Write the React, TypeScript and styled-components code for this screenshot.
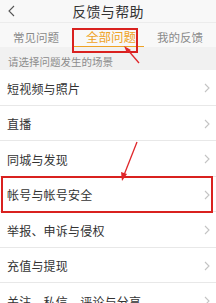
import React from "react";
import styled, { createGlobalStyle } from "styled-components";

const Global = createGlobalStyle`
  html, body { margin: 0; padding: 0; background: #ffffff; }
  body {
    font-family: "Noto Sans CJK SC", "Noto Sans", sans-serif;
    width: 216px;
    height: 303px;
    overflow: hidden;
  }
`;

const Page = styled.div`
  position: relative;
  width: 216px;
  height: 303px;
  overflow: hidden;
  background: #ffffff;
`;

const Header = styled.div`
  display: grid;
  grid-template-columns: 30px 1fr 30px;
  align-items: center;
  height: 22px;
  background: #f8f8f8;
`;

const Back = styled.div`
  display: flex;
  align-items: center;
  padding-left: 8px;
  height: 22px;
`;

const Title = styled.div`
  text-align: center;
  font-size: 14px;
  letter-spacing: 0.3px;
  color: #333333;
  line-height: 22px;
`;

const Tabs = styled.div`
  display: grid;
  grid-template-columns: 72px 72px 72px;
  height: 25px;
  background: #f8f8f8;
  border-top: 1px solid #ececec;
  box-sizing: border-box;
`;

const Tab = styled.div<{ $active?: boolean }>`
  position: relative;
  display: flex;
  align-items: center;
  justify-content: center;
  padding-left: ${(p) => (p.$active ? "6px" : "0")};
  padding-top: 6px;
  font-size: ${(p) => (p.$active ? "12.5px" : "11.5px")};
  color: ${(p) => (p.$active ? "#efa325" : "#8a8a8a")};
  border-bottom: 1.5px solid ${(p) => (p.$active ? "#efa325" : "transparent")};
  line-height: 1;
`;

const TabMark = styled.div`
  position: absolute;
  left: 0;
  top: 5px;
  width: 66px;
  height: 25px;
  border: 2px solid #d9211f;
  box-sizing: border-box;
  z-index: 2;
`;

const Hint = styled.div`
  height: 23px;
  display: flex;
  align-items: center;
  padding-left: 8px;
  padding-top: 5px;
  box-sizing: border-box;
  background: #f1f1f1;
  font-size: 10.5px;
  color: #8c8c8c;
`;

const List = styled.div`
  display: flex;
  flex-direction: column;
`;

const Row = styled.div<{ $marked?: boolean }>`
  position: relative;
  display: flex;
  align-items: center;
  justify-content: space-between;
  height: 35.5px;
  padding: 2px 6px 0 7px;
  box-sizing: border-box;
  border-bottom: 1px solid #e8e8e8;
  font-size: 12px;
  color: #333333;
  ${(p) =>
    p.$marked &&
    `
    &::after {
      content: "";
      position: absolute;
      left: 1px;
      right: 3px;
      top: -1px;
      bottom: -2px;
      border: 2px solid #d9211f;
    }
  `}
`;

const Label = styled.span`
  letter-spacing: 0.2px;
`;

const Arrows = styled.svg`
  position: absolute;
  left: 0;
  top: 0;
  pointer-events: none;
  z-index: 3;
`;

const Chevron = () => (
  <svg width="6" height="10" viewBox="0 0 6 10">
    <path d="M1 1 L5 5 L1 9" fill="none" stroke="#c4c4c4" strokeWidth="1.1" />
  </svg>
);

const items = [
  "短视频与照片",
  "直播",
  "同城与发现",
  "帐号与帐号安全",
  "举报、申诉与侵权",
  "充值与提现",
  "关注、私信、评论与分享",
];

export default function App() {
  return (
    <Page>
      <Global />
      <Header>
        <Back>
          <svg width="7" height="12" viewBox="0 0 7 12">
            <path d="M6 1 L1 6 L6 11" fill="none" stroke="#555" strokeWidth="1.1" />
          </svg>
        </Back>
        <Title>反馈与帮助</Title>
        <span />
      </Header>
      <Tabs>
        <Tab>常见问题</Tab>
        <Tab $active>
          全部问题
          <TabMark />
        </Tab>
        <Tab>我的反馈</Tab>
      </Tabs>
      <Hint>请选择问题发生的场景</Hint>
      <List>
        {items.map((t, i) => (
          <Row key={t} $marked={i === 3}>
            <Label>{t}</Label>
            <Chevron />
          </Row>
        ))}
      </List>
      <Arrows width="216" height="303" viewBox="0 0 216 303">
        <line x1="139" y1="63" x2="127" y2="49" stroke="#e0262a" strokeWidth="1.3" />
        <path d="M124 46 L131 50 L127 53 Z" fill="#e0262a" />
        <line x1="137" y1="142" x2="124" y2="175" stroke="#e0262a" strokeWidth="1.3" />
        <path d="M122 181 L121 172 L127 174 Z" fill="#e0262a" />
      </Arrows>
    </Page>
  );
}
